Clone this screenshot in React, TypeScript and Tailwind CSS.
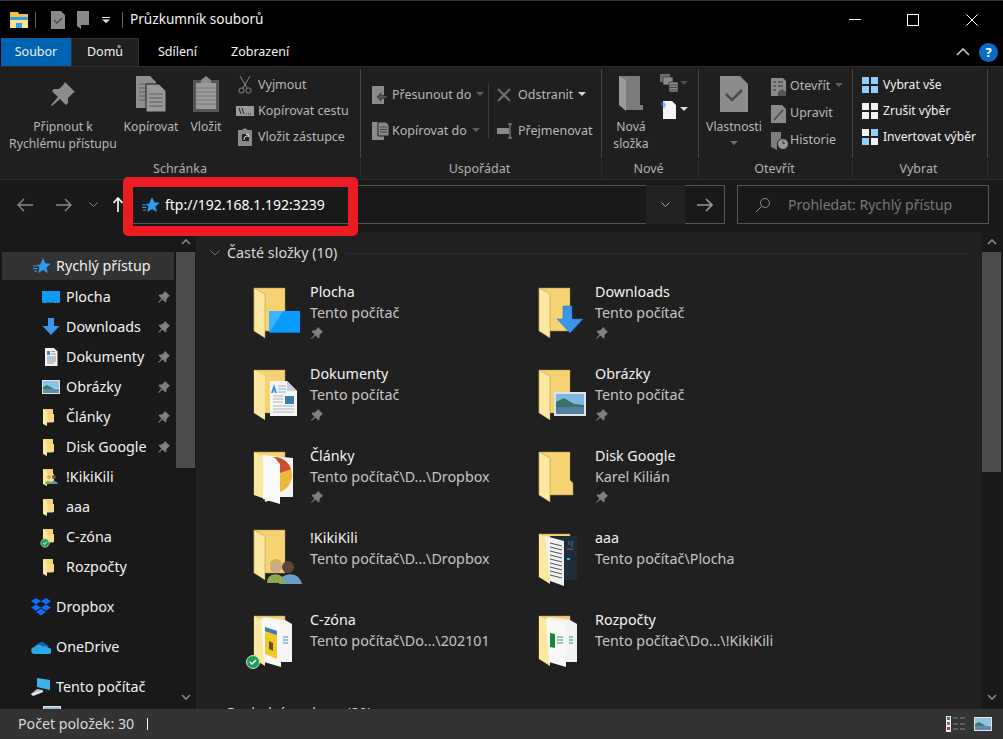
import type { ReactNode } from 'react';

const Pin = ({ className = '' }: { className?: string }) => (
  <svg viewBox="0 0 14 14" className={`w-[14px] h-[14px] ${className}`}>
    <path fill="#7d8084" d="M8 1 13 6 12 6.5 9.5 9 9.5 11.5 8.5 12.5 5.5 9.5 1.5 13 1 12.5 4.5 8.5 1.5 5.5 2.5 4.5 5 4.5 7.5 2Z" />
  </svg>
);

const Star = () => (
  <svg viewBox="0 0 18 18" className="w-[18px] h-[18px]">
    <path fill="#2f9bf0" d="M10 1l2.2 5.2 5.6.5-4.3 3.7 1.3 5.5L10 13l-4.8 2.9 1.3-5.5-3-2.6h3.6L10 1z" />
    <path stroke="#2f9bf0" strokeWidth="1" d="M0 9h4M0 11.5h4.5M1 14h3" />
  </svg>
);

const Caret = ({ color = '#6e6e6e' }: { color?: string }) => (
  <svg viewBox="0 0 8 4" className="w-2 h-1 inline-block">
    <path fill={color} d="M0 0h8L4 4z" />
  </svg>
);

const SmallFolder = ({ badge, people }: { badge?: boolean; people?: boolean }) => (
  <svg viewBox="0 0 18 18" className="w-[18px] h-[18px] overflow-visible">
    <path fill="#f6d36f" d="M1 1h10v13.5H1z" />
    <path fill="#f9dc84" d="M5 6h7v8H5z" />
    <path fill="#fde8a2" d="M1 1l4 2v15l-4-2z" />
    {people && (
      <g>
        <circle cx="7" cy="9" r="2" fill="#c9a27e" />
        <path fill="#8aa650" d="M3 16c0-4 6-4 7 0z" />
        <circle cx="12" cy="9" r="2" fill="#6e5240" />
        <path fill="#5f8fc0" d="M8 16c0-4 7-4 8 0z" />
      </g>
    )}
    {badge && (
      <g>
        <circle cx="3" cy="15" r="4.2" fill="#1f9d55" stroke="#d8e8dc" strokeWidth="0.6" />
        <path d="M1.2 15l1.3 1.3 2.4-2.6" stroke="#fff" strokeWidth="1" fill="none" />
      </g>
    )}
  </svg>
);

const Desktop = () => (
  <svg viewBox="0 0 18 14" className="w-[18px] h-[14px]">
    <path fill="#0f9bf5" d="M0 1h18v12H0z" />
    <path fill="#0570c4" d="M0 12h18v1H0z" />
    <path fill="#dff" d="M2 12h1v.6H2zM13 12h1v.6h-1zM15 12h1v.6h-1z" />
  </svg>
);
const DownArrow = () => (
  <svg viewBox="0 0 18 18" className="w-[18px] h-[18px]">
    <path fill="#3b97ea" d="M6 0h6v8h5.5L9 17 .5 8H6z" />
  </svg>
);
const Doc = () => (
  <svg viewBox="0 0 18 18" className="w-[18px] h-[18px]">
    <path fill="#f2f2f2" d="M3 0h9l3.5 3.5V18H3z" />
    <path fill="#2f8fd8" d="M5 3h3v4H5z" />
    <path stroke="#8a9aa8" d="M9 3.5h4M9 6h5M5 9h9M5 11h9M5 13h9M5 15h7" />
  </svg>
);
const Picture = () => (
  <svg viewBox="0 0 18 14" className="w-[18px] h-[14px]">
    <path fill="#e4e4e4" d="M0 0h18v14H0z" />
    <path fill="#8fc3e6" d="M1 1h16v7H1z" />
    <path fill="#3f7a68" d="M1 7l4-2 6 3.5 6 .5v1H1z" />
    <path fill="#5c8cac" d="M1 9h16v4H1z" />
  </svg>
);
const Dropbox = () => (
  <svg viewBox="0 0 20 18" className="w-5 h-[18px]">
    <path fill="#0f6cff" d="M5 0 0 3.2l5 3.2 5-3.2zM15 0l-5 3.2 5 3.2 5-3.2zM0 9.6l5 3.2 5-3.2-5-3.2zM15 6.4l-5 3.2 5 3.2 5-3.2zM5 14l5 3.5 5-3.5-5-3.2z" />
  </svg>
);
const OneDrive = () => (
  <svg viewBox="0 0 20 13" className="w-5 h-[13px]">
    <path fill="#0a62b8" d="M5 6a5.5 5.5 0 0 1 10-2.5A4 4 0 0 1 18 7L8 9z" />
    <path fill="#2ba8e8" d="M4 13a3.5 3.5 0 0 1-.5-7A5 5 0 0 1 12 6a3 3 0 0 1 5 1 3 3 0 0 1 1 6z" />
  </svg>
);
const Computer = () => (
  <svg viewBox="0 0 20 18" className="w-5 h-[18px]">
    <path fill="#3fb0ee" d="M6 0l13 2v10L6 9z" />
    <path fill="#bfc4c8" d="M6 11l6 1v2L1 17l-1-1z" />
    <path fill="#eee" d="M0 16l11-3 1 1-10 4z" />
  </svg>
);

type RowProps = { icon: ReactNode; label: string; pin?: boolean };

const SideItem = ({ icon, label, pin }: RowProps) => (
  <div className="h-[30px] flex items-center pl-[42px] pr-[5px]">
    <span className="w-6 flex items-center shrink-0">{icon}</span>
    <span className="flex-1 text-[#f0f0f0] pb-px">{label}</span>
    {pin && <Pin />}
  </div>
);

const SideRoot = ({ icon, label, mt }: { icon: ReactNode; label: string; mt?: boolean }) => (
  <div className={`h-[30px] flex items-center pl-[31px] ${mt ? 'mt-[10px]' : ''}`}>
    <span className="w-[25px] flex items-center shrink-0">{icon}</span>
    <span className="text-[#f0f0f0] pb-px">{label}</span>
  </div>
);

const BigFolder = ({ kind }: { kind: string }) => {
  const shift = kind === 'people' ? -4 : 0;
  return (
    <svg viewBox="0 0 48 52" className="w-12 h-[52px] overflow-visible shrink-0">
      <g transform={`translate(0 ${shift})`}>
        <path fill="#f5d272" stroke="#a98f4f" strokeWidth="0.5" d={kind === 'notch' ? 'M0 1h31v28l3 3v12H0z' : 'M0 1h31v43H0z'} />
        {kind === 'docs' || kind === 'cd' || kind === 'czone' || kind === 'excel' || kind === 'dark' ? null : (
          <path fill="#fde8a2" stroke="#a98f4f" strokeWidth="0.5" d="M0 1l11 6v44L0 44z" />
        )}
        {kind === 'docs' && <path fill="#fde8a2" d="M0 1l11 6v44L0 44z" />}
      </g>

      {kind === 'desktop' && (
        <g>
          <path fill="#0a9bff" d="M15 24h31v22H15z" />
          <path fill="#3bb4ff" d="M15 46l14-22h-14z" />
          <path fill="#0772c0" d="M15 45h31v1H15z" />
        </g>
      )}
      {kind === 'download' && <path fill="#3a96e8" stroke="#1e6fb8" strokeWidth="0.5" d="M24 19h9v13h11L31 46 18 32h6z" />}
      {kind === 'docs' && (
        <g>
          <path fill="#f6f6f6" d="M16 12h17l10 10v25H16z" />
          <path fill="#c9d2da" d="M33 12l10 10H33z" />
          <path fill="#3b93d8" d="M20 15l3 9h-2l-1-3-1 3h-2z" />
          <path stroke="#7fb4dc" strokeWidth="1" d="M24 17h8M24 20h8M24 23h8" />
          <path fill="#3c7ea6" d="M31 27h9v8h-9z" />
          <path stroke="#a8b4be" strokeWidth="1" d="M19 27h10M19 30h10M19 33h10M19 37h21M19 40h21M19 43h21" />
        </g>
      )}
      {kind === 'picture' && (
        <g>
          <path fill="#dfe3e6" d="M15 23h32v24H15z" />
          <path fill="#7cb7e0" d="M17 25h28v12H17z" />
          <path fill="#3b7268" d="M17 33l8-4 10 6 10 1v3H17z" />
          <path fill="#4f7fa3" d="M17 38h28v7H17z" />
        </g>
      )}
      {kind === 'cd' && (
        <g>
          <path fill="#f3f3f3" d="M8 4l31 3v39H25l-14 5z" />
          <circle cx="20" cy="24" r="18" fill="#e9b93a" />
          <path fill="#cf4a32" d="M20 6a18 18 0 0 1 17 12l-17 6z" />
          <path fill="#fde8a2" d="M0 1l11 6v41L0 44z" />
          <path fill="#f9f9f9" d="M9 4l12 3 5 6v40L9 48z" />
        </g>
      )}
      {kind === 'people' && (
        <g>
          <circle cx="34" cy="34" r="6" fill="#5e4636" />
          <path fill="#6d9bc8" d="M25 51c0-12 20-14 23 0z" />
          <circle cx="22" cy="34" r="6" fill="#cdaa88" />
          <path fill="#d0b060" d="M16 32c0-8 12-8 12 0l-2-2h-8z" />
          <path fill="#8fa84f" d="M13 50c0-12 17-11 18 0z" />
        </g>
      )}
      {kind === 'dark' && (
        <g>
          <path fill="#fde8a2" d="M0 1l11 6v44L0 44z" />
          <path fill="#1f2c3a" d="M11 3h27v44H22z" />
          <path fill="#40a8e8" d="M28 25h3v2h-3z" />
          <path stroke="#5c7486" strokeWidth="1" d="M30 8v4M33 8v6M28 16h6" />
          <path fill="#f1f1f1" d="M6 3l19 5v45L11 48z" />
          <path stroke="#555" strokeWidth="1" d="M11 10l12 3M11 14l12 3M11 18l12 3M11 22l12 3M11 26l12 3M11 30l12 3M11 34l12 3M11 38l12 3M11 42l12 3" />
        </g>
      )}
      {kind === 'czone' && (
        <g>
          <path fill="#f5f5f5" d="M9 2l22 3 7 4v38H20z" />
          <path fill="#fde8a2" d="M0 1l11 6v44L0 44z" />
          <path fill="#f8f8f8" d="M7 3l17 4 3 6v39L10 47z" />
          <path fill="#f3c928" d="M11 12l12 4v28l-12-5z" />
          <path fill="#3a7ac0" d="M11 12l12 4v4l-12-4z" />
          <path fill="#6b4a30" d="M15 26l4 2v8l-4-2z" />
          <path stroke="#3c8ed0" strokeWidth="1" d="M29 22h5M29 25h5M29 28h5" />
          <circle cx="-1" cy="47" r="6.5" fill="#1f9d55" stroke="#cfe3d6" />
          <path d="M-4 47l2 2 4-4" stroke="#fff" strokeWidth="1.4" fill="none" />
        </g>
      )}
      {kind === 'excel' && (
        <g>
          <path fill="#f2f2f2" d="M9 2l22 3 7 4v38H20z" />
          <path fill="#fde8a2" d="M0 1l11 6v44L0 44z" />
          <path fill="#f8f8f8" d="M7 3l17 4 3 6v39L10 47z" />
          <path fill="#16873f" d="M11 18l5 1v14l-5-1z" />
          <path stroke="#2d9a5a" strokeWidth="1" d="M18 22h6M18 25h6M18 28h6M30 22h4M30 25h4M30 28h4" />
        </g>
      )}
    </svg>
  );
};

type Item = { kind: string; name: string; sub: string; pin?: boolean };

const items: Item[] = [
  { kind: 'desktop', name: 'Plocha', sub: 'Tento počítač', pin: true },
  { kind: 'download', name: 'Downloads', sub: 'Tento počítač', pin: true },
  { kind: 'docs', name: 'Dokumenty', sub: 'Tento počítač', pin: true },
  { kind: 'picture', name: 'Obrázky', sub: 'Tento počítač', pin: true },
  { kind: 'cd', name: 'Články', sub: 'Tento počítač\\D...\\Dropbox', pin: true },
  { kind: 'notch', name: 'Disk Google', sub: 'Karel Kilián', pin: true },
  { kind: 'people', name: '!KikiKili', sub: 'Tento počítač\\D...\\Dropbox' },
  { kind: 'dark', name: 'aaa', sub: 'Tento počítač\\Plocha' },
  { kind: 'czone', name: 'C-zóna', sub: 'Tento počítač\\Do...\\202101' },
  { kind: 'excel', name: 'Rozpočty', sub: 'Tento počítač\\Do...\\!KikiKili' },
];

const BigBtn = ({ w, icon, lines, caret }: { w: string; icon: ReactNode; lines: string[]; caret?: boolean }) => (
  <div className={`${w} flex flex-col items-center pt-[6px] shrink-0 text-[12.2px]`}>
    <div className="h-[37px] flex items-center justify-center mb-[6px]">{icon}</div>
    {lines.map((l) => (
      <div key={l} className="leading-[17px] whitespace-nowrap text-[#b8b8b8]">{l}</div>
    ))}
    {caret && <div className="leading-[10px] mt-[2px]"><Caret /></div>}
  </div>
);

const SmallBtn = ({ icon, label, h, iconW, white, caret }: { icon: ReactNode; label: string; h: string; iconW: string; white?: boolean; caret?: string }) => (
  <div className={`${h} flex items-center`}>
    <span className={`${iconW} flex items-center shrink-0`}>{icon}</span>
    <span className={`whitespace-nowrap ${white ? 'text-[#f2f2f2] text-[12.1px]' : 'text-[#b8b8b8]'}`}>{label}</span>
    {caret && <span className="ml-[5px] mb-[3px] flex"><Caret color={caret} /></span>}
  </div>
);

const Group = ({ w, label, pr, children }: { w: string; label: string; pr?: string; children: ReactNode }) => (
  <div className={`${w} flex flex-col shrink-0`}>
    <div className="h-[89px] flex border-r border-[#454545]">{children}</div>
    <div className={`h-[18px] flex items-center justify-center border-r border-[#2c2c2c] text-[#b0b0b0] mt-[2px] ${pr ?? ''}`}>{label}</div>
  </div>
);

const GRAY = '#8c8c8c';

const SelectIcon = ({ cells }: { cells: string[] }) => (
  <svg viewBox="0 0 18 18" className="w-[18px] h-[18px]">
    <path fill={cells[0]} d="M1 1h7v7H1z" />
    <path fill={cells[1]} d="M10 1h7v7h-7z" />
    <path fill={cells[2]} d="M1 10h7v7H1z" />
    <path fill={cells[3]} d="M10 10h7v7h-7z" />
  </svg>
);

export default function App() {
  return (
    <div className="w-[1003px] h-[739px] flex flex-col overflow-hidden bg-black text-[12.5px] font-['Noto_Sans','Open_Sans',sans-serif] relative">
      {/* title bar */}
      <div className="h-[38px] flex items-center shrink-0 border-t border-[#333]">
        <svg viewBox="0 0 18 16" className="w-[18px] h-4 ml-[10px]">
          <path fill="#f5c33b" d="M0 0h8l1 2h9v14H0z" />
          <path fill="#2f9bf0" d="M0 5h18v3H0zM6 11h6v5H6z" />
          <path fill="#fde08a" d="M0 8h18v8h-6v-5H6v5H0z" />
        </svg>
        <div className="w-px h-4 bg-[#666] ml-[7px]" />
        <svg viewBox="0 0 14 18" className="w-[14px] h-[18px] ml-[15px]">
          <path fill="#8a8a8a" d="M0 0h10l4 4v14H0z" />
          <path d="M3 9l3 3 5-5" stroke="#444" strokeWidth="1.3" fill="none" />
        </svg>
        <svg viewBox="0 0 12 18" className="w-3 h-[18px] ml-[12px]">
          <path fill="#8a8a8a" d="M0 0h12v14H4v4l-4-3z" />
        </svg>
        <svg viewBox="0 0 8 6" className="w-2 h-[6px] ml-[13px]">
          <path fill="#e8e8e8" d="M0 0h8v1H0zM0 2.5h8L4 6z" />
        </svg>
        <div className="w-px h-4 bg-[#666] ml-[12px]" />
        <span className="ml-[7px] text-[13.6px] text-[#f2f2f2]">Průzkumník souborů</span>
        <div className="flex-1" />
        <div className="w-3 h-px bg-white" />
        <div className="w-3 h-3 border border-white ml-[46px]" />
        <svg viewBox="0 0 12 12" className="w-3 h-3 ml-[47px] mr-[25px]">
          <path stroke="#fff" d="M.5.5l11 11M11.5.5l-11 11" />
        </svg>
      </div>

      {/* tabs */}
      <div className="h-[28px] flex shrink-0 items-stretch pl-px text-[#f0f0f0]">
        <div className="w-[70px] bg-[#0063b1] flex items-center justify-center">Soubor</div>
        <div className="w-[68px] bg-[#1f1f1f] border-x border-t border-[#2e2e2e] flex items-center justify-center">Domů</div>
        <div className="ml-[19px] flex items-center">Sdílení</div>
        <div className="ml-[34px] flex items-center">Zobrazení</div>
        <div className="flex-1" />
        <svg viewBox="0 0 14 8" className="w-[14px] h-2 self-center mr-[9px]">
          <path d="M1 7l6-6 6 6" stroke="#c8c8c8" strokeWidth="1.6" fill="none" />
        </svg>
        <div className="w-[19px] h-[19px] rounded-full bg-[#0a6cc4] self-center mr-[5px] flex items-center justify-center text-white font-bold text-[13px] leading-none">?</div>
      </div>

      {/* ribbon */}
      <div className="h-[114px] shrink-0 bg-[#1f1f1f] border-y border-[#2e2e2e] pt-[2px] flex">
        <Group w="w-[361px]" label="Schránka">
          <div className="w-[5px]" />
          <BigBtn
            w="w-[116px]"
            lines={['Připnout k', 'Rychlému přístupu']}
            icon={
              <svg viewBox="0 0 14 14" className="w-[28px] h-[28px]">
                <path fill={GRAY} d="M8 1 13 6 12 6.5 9.5 9 9.5 11.5 8.5 12.5 5.5 9.5 1.5 13 1 12.5 4.5 8.5 1.5 5.5 2.5 4.5 5 4.5 7.5 2Z" />
              </svg>
            }
          />
          <BigBtn
            w="w-[60px]"
            lines={['Kopírovat']}
            icon={
              <svg viewBox="0 0 30 36" className="w-[30px] h-9">
                <path fill="#8f8f8f" d="M0 0h14l6 6v26H0z" />
                <path stroke="#5e5e5e" d="M3 8h14M3 12h14M3 16h14M3 20h14M3 24h14" />
                <path fill="#999" stroke="#1f1f1f" d="M10 8h13l7 7v21H10z" />
                <path stroke="#5e5e5e" d="M13 18h14M13 22h14M13 26h14M13 30h14" />
              </svg>
            }
          />
          <BigBtn
            w="w-[50px]"
            lines={['Vložit']}
            icon={
              <svg viewBox="0 0 26 36" className="w-[26px] h-9">
                <path fill="#555" d="M0 4h26v32H0z" />
                <path fill="#8a8a8a" d="M8 4l5-4 5 4v3H8z" />
                <path fill="#9a9a9a" d="M3 7h20v26H3z" />
                <path stroke="#777" d="M3 12h20M3 16h20M3 20h20M3 24h20M3 28h20" />
              </svg>
            }
          />
          <div className="w-[5px]" />
          <div className="pt-[3px]">
            <SmallBtn
              h="h-[26px]"
              iconW="w-[22px]"
              label="Vyjmout"
              icon={
                <svg viewBox="0 0 14 18" className="w-[14px] h-[18px] ml-[2px]">
                  <path stroke="#8a8a8a" fill="none" d="M2 0l7 12M12 0L5 12" />
                  <circle cx="3.5" cy="14.5" r="2.6" stroke="#8a8a8a" fill="none" />
                  <circle cx="10.5" cy="14.5" r="2.6" stroke="#8a8a8a" fill="none" />
                </svg>
              }
            />
            <SmallBtn
              h="h-[26px]"
              iconW="w-[22px]"
              label="Kopírovat cestu"
              icon={
                <svg viewBox="0 0 18 10" className="w-[18px] h-[10px]">
                  <path fill="#9a9a9a" d="M0 0h18v10H0z" />
                  <path stroke="#222" d="M3 2l2 6M6 2l2 6M10 8h1M12 8h1M14 8h1" />
                </svg>
              }
            />
            <SmallBtn
              h="h-[26px]"
              iconW="w-[22px]"
              label="Vložit zástupce"
              icon={
                <svg viewBox="0 0 14 18" className="w-[14px] h-[18px] ml-[2px]">
                  <path fill="#8a8a8a" d="M0 2h4l3-2 3 2h4v16H0z" />
                  <path fill="#222" d="M4 6h7v7H4z" />
                  <path d="M6 12c0-3 1-4 4-4M8 6.5h2.5V9" stroke="#ddd" fill="none" />
                </svg>
              }
            />
          </div>
        </Group>

        <Group w="w-[241px]" label="Uspořádat" pr="pr-[3px]">
          <div className="w-[127px] shrink-0 pl-[10px] pt-[8px]">
            <SmallBtn
              h="h-9"
              iconW="w-[21px]"
              label="Přesunout do"
              caret="#5f5f5f"
              icon={
                <svg viewBox="0 0 18 18" className="w-[18px] h-[18px]">
                  <path fill="#8a8a8a" d="M1 0h12v18H1z" />
                  <path fill="#555" stroke="#1f1f1f" strokeWidth="0.6" d="M6 11l4-4v2.5h6v3h-6V15z" />
                </svg>
              }
            />
            <SmallBtn
              h="h-9"
              iconW="w-[21px]"
              label="Kopírovat do"
              caret="#5f5f5f"
              icon={
                <svg viewBox="0 0 18 18" className="w-[18px] h-[18px]">
                  <path fill="#8a8a8a" d="M1 0h12v18H1z" />
                  <path fill="#888" stroke="#1f1f1f" d="M7 0h8l3 3v11H7z" />
                  <path stroke="#444" d="M9 5h7M9 7.5h7M9 10h7" />
                </svg>
              }
            />
          </div>
          <div className="h-[55px] w-px bg-[#3a3a3a] mt-[14px] shrink-0" />
          <div className="pl-2 pt-[8px]">
            <SmallBtn
              h="h-9"
              iconW="w-[21px]"
              label="Odstranit"
              caret="#d8d8d8"
              icon={
                <svg viewBox="0 0 14 14" className="w-[14px] h-[14px]">
                  <path stroke="#707070" strokeWidth="2" d="M1 1l12 12M13 1L1 13" />
                </svg>
              }
            />
            <SmallBtn
              h="h-9"
              iconW="w-[21px]"
              label="Přejmenovat"
              icon={
                <svg viewBox="0 0 18 16" className="w-[18px] h-4">
                  <path fill="#8a8a8a" d="M0 5h12v6H0z" />
                  <path stroke="#9a9a9a" fill="none" d="M11 1h4M11 15h4M13 1v14" />
                </svg>
              }
            />
          </div>
        </Group>

        <Group w="w-[97px]" label="Nové" pr="pr-[3px]">
          <BigBtn
            w="w-[58px]"
            lines={['Nová', 'složka']}
            icon={
              <svg viewBox="0 0 24 35" className="w-6 h-[35px]">
                <path fill="#7c7c7c" d="M0 0h21v29h3v5H6z" />
                <path fill="#9a9a9a" d="M0 0l7 4v31L0 29z" />
              </svg>
            }
          />
          <div className="pt-[5px] flex flex-col">
            <div className="flex items-center h-[18px]">
              <svg viewBox="0 0 18 18" className="w-[18px] h-[18px]">
                <path fill="#6e6e6e" d="M0 0h10v8H0z" />
                <path fill="#8a8a8a" stroke="#1f1f1f" strokeWidth="0.6" d="M3 3h10v8H3z" />
                <path fill="#8a8a8a" stroke="#1f1f1f" strokeWidth="0.6" d="M9 8h9v10H9z" />
                <path stroke="#444" d="M10 11h7M10 13.5h7M10 16h7" />
              </svg>
              <span className="ml-[2px] flex"><Caret color="#4d4d4d" /></span>
            </div>
            <div className="flex items-center h-5 mt-[7px] ml-[1px]">
              <svg viewBox="0 0 16 19" className="w-4 h-[19px]">
                <path fill="#f5f5f5" d="M2 1h9l4 4v14H2z" />
                <path stroke="#2f80ed" d="M0 3h4M0 5h5M1 7h3" />
              </svg>
              <span className="ml-[3px] flex"><Caret color="#d8d8d8" /></span>
            </div>
          </div>
        </Group>

        <Group w="w-[154px]" label="Otevřít" pr="pr-[2px]">
          <BigBtn
            w="w-[70px]"
            lines={['Vlastnosti']}
            caret
            icon={
              <svg viewBox="0 0 28 36" className="w-7 h-9">
                <path fill="#8c8c8c" d="M0 0h20l8 8v28H0z" />
                <path d="M6 18l6 6 10-10" stroke="#4a4a4a" strokeWidth="2.5" fill="none" />
              </svg>
            }
          />
          <div className="pl-[1px] pt-[4px]">
            <SmallBtn
              h="h-[27px]"
              iconW="w-5"
              label="Otevřít"
              caret="#5f5f5f"
              icon={
                <svg viewBox="0 0 16 18" className="w-4 h-[18px] ml-px">
                  <path fill="#8a8a8a" d="M0 0h12l3 3v15H0z" />
                  <path stroke="#333" d="M2 4h3M7 4h5M2 8h3M7 8h5M2 12h3" />
                  <path fill="#555" d="M7 18v-4l4-3 4 3v4z" />
                </svg>
              }
            />
            <SmallBtn
              h="h-[27px]"
              iconW="w-5"
              label="Upravit"
              icon={
                <svg viewBox="0 0 16 18" className="w-4 h-[18px] ml-px">
                  <path fill="#8a8a8a" d="M0 0h11l4 4v14H0z" />
                  <path stroke="#444" strokeWidth="1.4" d="M3 15L12 5" />
                </svg>
              }
            />
            <SmallBtn
              h="h-[27px]"
              iconW="w-5"
              label="Historie"
              icon={
                <svg viewBox="0 0 18 18" className="w-[18px] h-[18px] ml-px">
                  <path fill="#7c7c7c" d="M0 0h10v12H6v6L0 15z" />
                  <circle cx="12" cy="12" r="5.5" fill="#9a9a9a" stroke="#1f1f1f" />
                  <path stroke="#333" d="M12 8.5V12l2-1" fill="none" />
                </svg>
              }
            />
          </div>
        </Group>

        <Group w="w-[135px]" label="Vybrat" pr="pr-[3px]">
          <div className="pl-2 pt-[3px]">
            <SmallBtn h="h-[26px]" iconW="w-[22px]" label="Vybrat vše" white icon={<SelectIcon cells={['#8ed0ff', '#8ed0ff', '#8ed0ff', '#8ed0ff']} />} />
            <SmallBtn h="h-[26px]" iconW="w-[22px]" label="Zrušit výběr" white icon={<SelectIcon cells={['#f2f2f2', '#f2f2f2', '#f2f2f2', '#f2f2f2']} />} />
            <SmallBtn h="h-[26px]" iconW="w-[22px]" label="Invertovat výběr" white icon={<SelectIcon cells={['#f2f2f2', '#8ed0ff', '#8ed0ff', '#f2f2f2']} />} />
          </div>
        </Group>
      </div>

      {/* address row */}
      <div className="h-[52px] shrink-0 bg-[#191919] flex items-start pt-[5px] relative">
        <div className="w-[133px] h-[39px] flex items-center shrink-0">
          <svg viewBox="0 0 16 14" className="w-4 h-[14px] ml-[17px]">
            <path d="M16 7H1M7 1L1 7l6 6" stroke="#8a8a8a" strokeWidth="1.4" fill="none" />
          </svg>
          <svg viewBox="0 0 16 14" className="w-4 h-[14px] ml-[23px]">
            <path d="M0 7h15M9 1l6 6-6 6" stroke="#8a8a8a" strokeWidth="1.4" fill="none" />
          </svg>
          <svg viewBox="0 0 9 5" className="w-[9px] h-[5px] ml-[17px]">
            <path d="M.5.5l4 4 4-4" stroke="#8a8a8a" fill="none" />
          </svg>
          <svg viewBox="0 0 10 15" className="w-[10px] h-[15px] ml-[15px]">
            <path d="M5 15V1M.5 6L5 1l4.5 5" stroke="#fff" strokeWidth="1.6" fill="none" />
          </svg>
        </div>
        <div className="w-[513px] h-[39px] border-y border-[#555] flex items-center pl-[9px] shrink-0">
          <Star />
          <span className="ml-[5px] text-white text-[14px] pb-px">ftp://192.168.1.192:3239</span>
        </div>
        <div className="w-[39px] h-[39px] bg-[#222] flex items-center justify-center shrink-0">
          <svg viewBox="0 0 9 5" className="w-[9px] h-[5px]">
            <path d="M.5.5l4 4 4-4" stroke="#a8a8a8" fill="none" />
          </svg>
        </div>
        <div className="w-10 h-[39px] border border-l-0 border-[#555] flex items-center justify-center shrink-0">
          <svg viewBox="0 0 16 14" className="w-4 h-[14px]">
            <path d="M0 7h15M9 1l6 6-6 6" stroke="#9a9a9a" strokeWidth="1.6" fill="none" />
          </svg>
        </div>
        <div className="w-[252px] h-[39px] ml-3 border border-[#555] flex items-center shrink-0">
          <svg viewBox="0 0 16 16" className="w-4 h-4 ml-[17px]">
            <circle cx="10" cy="6" r="4.5" stroke="#8a8a8a" fill="none" />
            <path d="M6.5 9.5L1 15" stroke="#8a8a8a" />
          </svg>
          <span className="ml-[17px] text-[#777] text-[14px] pb-px">Prohledat: Rychlý přístup</span>
        </div>
        {/* red highlight */}
        <div className="absolute left-[123px] -top-[3px] w-[235px] h-[59px] border-[10px] border-[#ed1c24] rounded-[5px]" />
      </div>

      {/* body */}
      <div className="flex-1 min-h-0 flex overflow-hidden text-[14.3px]">
        <div className="w-[198px] shrink-0 bg-[#191919] flex border-r-2 border-[#222] overflow-hidden">
          <div className="w-[176px] shrink-0 pt-5">
            <div className="h-[30px]">
              <div className="h-[28px] ml-[2px] mr-[2px] bg-[#333] flex items-center pl-[31px]">
                <span className="w-[23px] flex"><Star /></span>
                <span className="text-[#f0f0f0]">Rychlý přístup</span>
              </div>
            </div>
            <SideItem label="Plocha" pin icon={<Desktop />} />
            <SideItem label="Downloads" pin icon={<DownArrow />} />
            <SideItem label="Dokumenty" pin icon={<Doc />} />
            <SideItem label="Obrázky" pin icon={<Picture />} />
            <SideItem label="Články" pin icon={<SmallFolder />} />
            <SideItem label="Disk Google" pin icon={<SmallFolder />} />
            <SideItem label="!KikiKili" icon={<SmallFolder people />} />
            <SideItem label="aaa" icon={<SmallFolder />} />
            <SideItem label="C-zóna" icon={<SmallFolder badge />} />
            <SideItem label="Rozpočty" icon={<SmallFolder />} />
            <SideRoot mt label="Dropbox" icon={<Dropbox />} />
            <SideRoot mt label="OneDrive" icon={<OneDrive />} />
            <SideRoot mt label="Tento počítač" icon={<Computer />} />
            <div className="h-[30px] pl-[43px] pt-[4px]"><Picture /></div>
          </div>
          <div className="w-5 shrink-0 flex flex-col items-start">
            <div className="h-5 w-[19px] flex items-center justify-center">
              <svg viewBox="0 0 10 6" className="w-[10px] h-[6px]">
                <path d="M1 5l4-4 4 4" stroke="#8a8a8a" strokeWidth="1.6" fill="none" />
              </svg>
            </div>
            <div className="w-[19px] h-[216px] bg-[#4d4d4d]" />
            <div className="flex-1" />
            <div className="h-[20px] w-[19px] mb-[2px] flex items-center justify-center">
              <svg viewBox="0 0 10 6" className="w-[10px] h-[6px]">
                <path d="M1 1l4 4 4-4" stroke="#8a8a8a" strokeWidth="1.6" fill="none" />
              </svg>
            </div>
          </div>
        </div>

        <div className="flex-1 min-w-0 bg-[#202020] overflow-hidden pt-[11px]">
          <div className="h-5 flex items-center pl-[12px] pr-[10px]">
            <svg viewBox="0 0 10 6" className="w-[10px] h-[6px]">
              <path d="M.5.5L5 5 9.5.5" stroke="#777" fill="none" />
            </svg>
            <span className="ml-[7px] text-[#d8d8d8] pb-px">Časté složky (10)</span>
            <div className="flex-1 h-px bg-[#2a2a2a] ml-2" />
          </div>
          <div className="grid grid-cols-[285px_285px] pl-[56px] mt-[19px]">
            {items.map((it) => (
              <div key={it.name} className="h-[82px] flex">
                <div className="pt-[5px]"><BigFolder kind={it.kind} /></div>
                <div className="ml-2 whitespace-nowrap -mt-px">
                  <div className="leading-[21px] text-[#f2f2f2]">{it.name}</div>
                  <div className="leading-[21px] text-[#c4c4c4]">{it.sub}</div>
                  {it.pin && <Pin className="mt-[3px]" />}
                </div>
              </div>
            ))}
          </div>
          <div className="h-5 mt-[11px] flex items-center pl-[12px]">
            <svg viewBox="0 0 10 6" className="w-[10px] h-[6px]">
              <path d="M.5.5L5 5 9.5.5" stroke="#777" fill="none" />
            </svg>
            <span className="ml-[7px] text-[#d8d8d8]">Poslední soubory (20)</span>
          </div>
        </div>

        <div className="w-[21px] shrink-0 bg-[#191919] flex flex-col items-center pr-[2px]">
          <div className="h-5 flex items-center justify-center">
            <svg viewBox="0 0 10 6" className="w-[10px] h-[6px]">
              <path d="M1 5l4-4 4 4" stroke="#8a8a8a" strokeWidth="1.6" fill="none" />
            </svg>
          </div>
          <div className="w-[19px] h-[220px] bg-[#4d4d4d]" />
          <div className="flex-1" />
          <div className="h-5 mb-[2px] flex items-center justify-center">
            <svg viewBox="0 0 10 6" className="w-[10px] h-[6px]">
              <path d="M1 1l4 4 4-4" stroke="#8a8a8a" strokeWidth="1.6" fill="none" />
            </svg>
          </div>
        </div>
      </div>

      {/* status bar */}
      <div className="h-[30px] shrink-0 bg-[#333] flex items-center pl-[18px] text-[14.2px] text-[#d8d8d8]">
        <span>Počet položek: 30</span>
        <div className="w-px h-[12px] bg-white ml-[13px]" />
        <div className="flex-1" />
        <svg viewBox="0 0 19 16" className="w-[19px] h-4">
          <path fill="#eee" d="M0 0h5v16H0z" />
          <path fill="#3f7a68" d="M1 1h3v3H1z" />
          <path fill="#777" d="M1 6h3v3H1z" />
          <path fill="#c0392b" d="M1 11h3v3H1z" />
          <path stroke="#888" d="M7 2h5M14 2h5M7 8h5M14 8h5M7 13h5M14 13h5" />
        </svg>
        <div className="w-[18px] h-[14px] ml-[9px] mr-[11px] flex">
          <Picture />
        </div>
      </div>
    </div>
  );
}
